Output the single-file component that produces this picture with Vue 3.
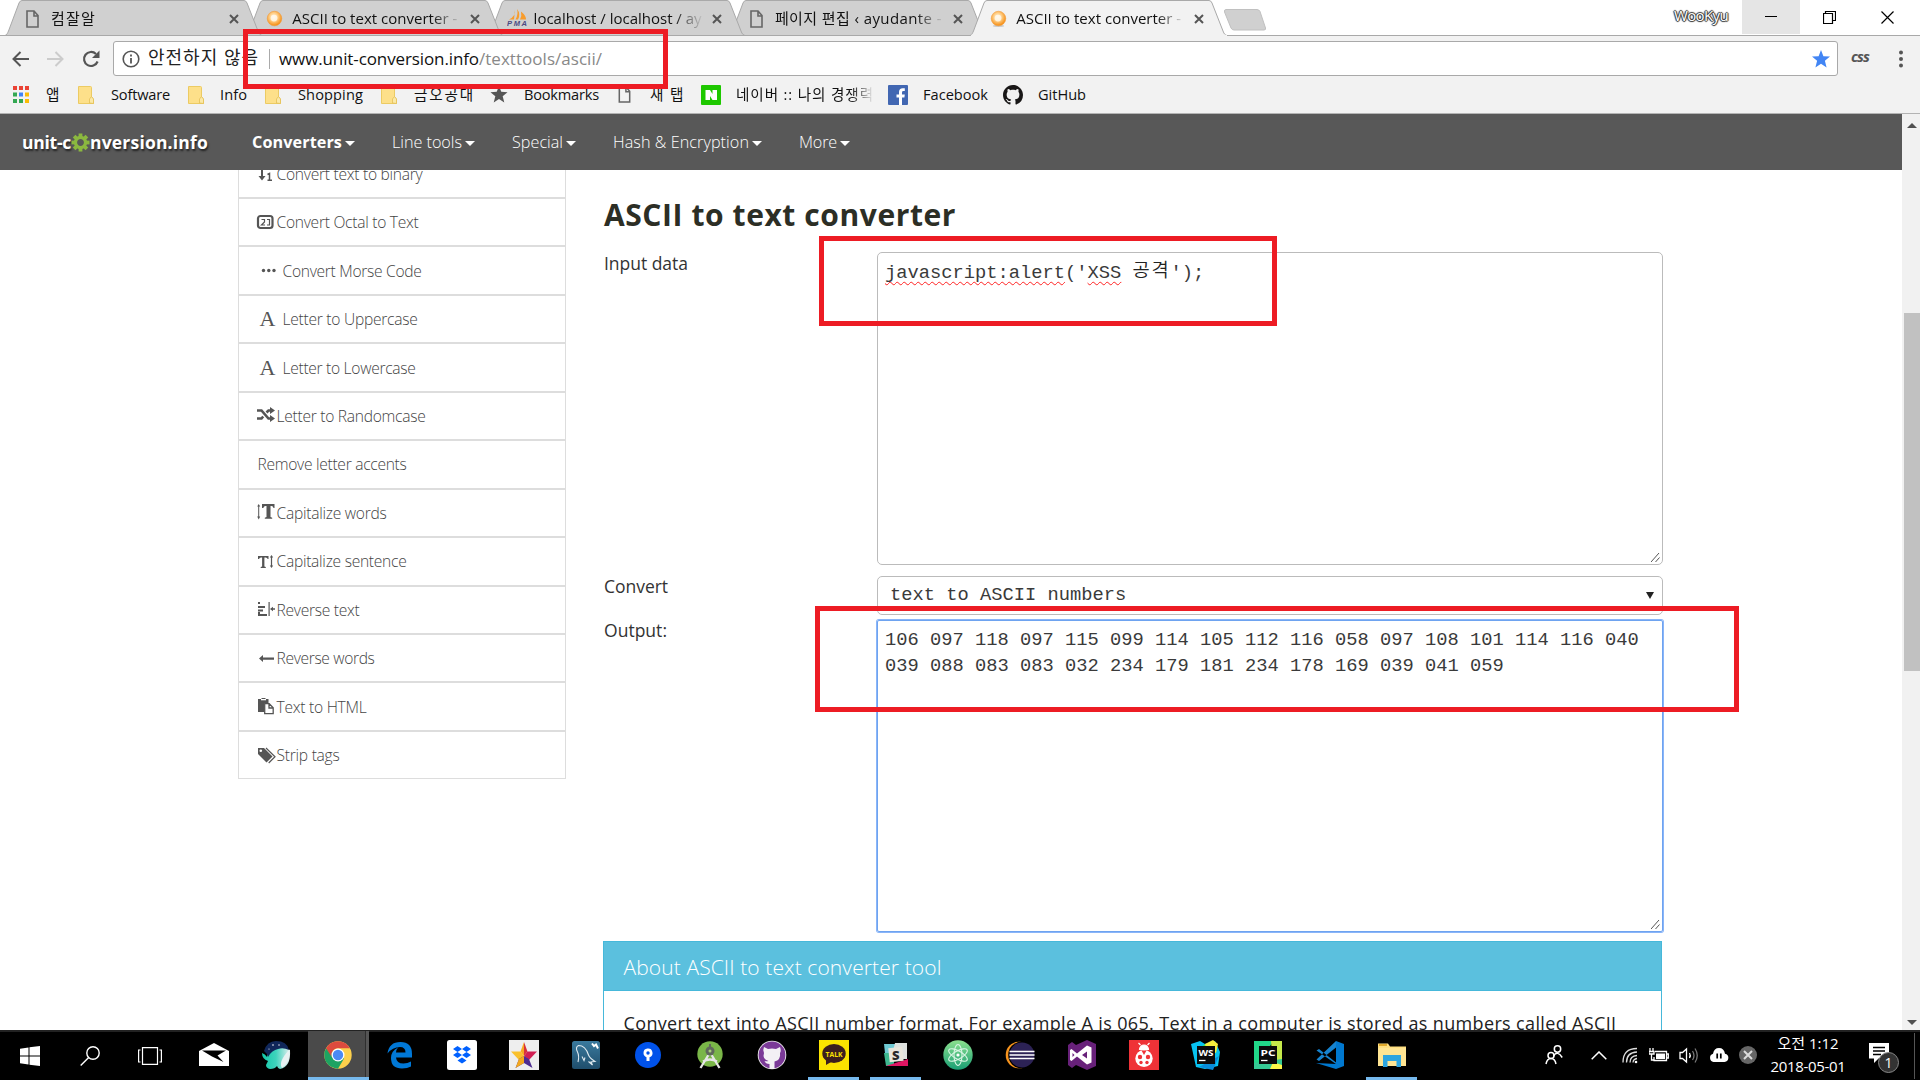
<script setup>
// Tracks a label out (or in) so that it occupies the given width.
const vFit = {
  mounted(el, { value }) {
    const width = el.getBoundingClientRect().width
    el.style.letterSpacing = (value - width) / el.textContent.length + 'px'
  }
}

const tabs = [
  { title: '컴잘알', icon: 'page', w: 45 },
  { title: 'ASCII to text converter -', icon: 'orb', w: 165 },
  { title: 'localhost / localhost / ay', icon: 'pma', w: 168 },
  { title: '페이지 편집 ‹ ayudante -', icon: 'page', w: 167 },
  { title: 'ASCII to text converter -', icon: 'orb', w: 165, active: true }
]

const bookmarks = [
  { icon: 'apps', x: 13, iw: 16, label: '앱', tx: 46, w: 15 },
  { icon: 'folder', x: 78, iw: 16, label: 'Software', tx: 111, w: 59 },
  { icon: 'folder', x: 188, iw: 16, label: 'Info', tx: 220, w: 27 },
  { icon: 'folder', x: 265, iw: 16, label: 'Shopping', tx: 298, w: 65 },
  { icon: 'folder', x: 381, iw: 16, label: '금오공대', tx: 414, w: 61 },
  { icon: 'star', x: 490, iw: 18, label: 'Bookmarks', tx: 524, w: 75 },
  { icon: 'page', x: 618, iw: 13, label: '새 탭', tx: 650, w: 35 },
  { icon: 'naver', x: 701, iw: 20, label: '네이버 :: 나의 경쟁력', tx: 736, w: 138, fade: true },
  { icon: 'fb', x: 888, iw: 20, label: 'Facebook', tx: 923, w: 65 },
  { icon: 'github', x: 1003, iw: 20, label: 'GitHub', tx: 1038, w: 48 }
].map((b, i, all) => {
  const prev = all[i - 1]
  return { ...b, lead: b.x - (prev ? prev.tx + prev.w : 0), gap: b.tx - b.x - b.iw }
})

const nav = [
  { label: 'Converters', w: 90, gap: 37, bold: true },
  { label: 'Line tools', w: 70, gap: 37 },
  { label: 'Special', w: 51, gap: 37 },
  { label: 'Hash & Encryption', w: 136, gap: 37 },
  { label: 'More', w: 38, gap: 0 }
]

const tools = [
  { label: 'Convert text to binary', icon: 'sort', w: 146 },
  { label: 'Convert Octal to Text', icon: 'octal', w: 142 },
  { label: 'Convert Morse Code', icon: 'morse', w: 139, wide: true },
  { label: 'Letter to Uppercase', icon: 'A', w: 135, wide: true },
  { label: 'Letter to Lowercase', icon: 'A', w: 133, wide: true },
  { label: 'Letter to Randomcase', icon: 'shuffle', w: 149 },
  { label: 'Remove letter accents', w: 149 },
  { label: 'Capitalize words', icon: 'theight', w: 110 },
  { label: 'Capitalize sentence', icon: 'tsmall', w: 130 },
  { label: 'Reverse text', icon: 'indent', w: 83 },
  { label: 'Reverse words', icon: 'left', w: 98 },
  { label: 'Text to HTML', icon: 'paste', w: 90 },
  { label: 'Strip tags', icon: 'tags', w: 63 }
]

const output = [
  '106 097 118 097 115 099 114 105 112 116 058 097 108 101 114 116 040',
  '039 088 083 083 032 234 179 181 234 178 169 039 041 059'
]

const apps = ['mail', 'whale', 'chrome', 'edge', 'dropbox', 'starapp', 'mysql', 'sourcetree', 'android', 'ghdesk', 'talk', 'slack', 'atom', 'eclipse', 'vs', 'bug', 'ws', 'pc', 'code', 'explorer']
const running = ['chrome', 'talk', 'slack', 'explorer']
</script>

<template>
  <div class="screen">
    <!-- symbols shared by tabs and bookmarks -->
    <svg class="defs" width="0" height="0">
      <defs>
        <radialGradient id="orbFill" cx=".45" cy=".4" r=".6">
          <stop offset="0" stop-color="#fff6e0" /><stop offset=".45" stop-color="#ffd08a" /><stop offset="1" stop-color="#f58a0c" />
        </radialGradient>
        <linearGradient id="whaleFill" x1="0" x2="1"><stop offset="0" stop-color="#12c8a8" /><stop offset=".5" stop-color="#3fd3bd" /><stop offset="1" stop-color="#e4efef" /></linearGradient>
        <linearGradient id="atomFill" x1="0" y1="0" x2="0" y2="1"><stop offset="0" stop-color="#8be08e" /><stop offset="1" stop-color="#1a9f74" /></linearGradient>
        <linearGradient id="mysqlFill" x1="0" y1="0" x2="0" y2="1"><stop offset="0" stop-color="#3a7a9e" /><stop offset="1" stop-color="#1f4e6c" /></linearGradient>
      </defs>
      <symbol id="page" viewBox="0 0 13 18"><path d="M1 1h7l4 4.500v11.500H1zM8 1v5h4" fill="none" stroke="#666" stroke-width="1.600" /></symbol>
      <symbol id="orb" viewBox="0 0 18 18"><ellipse cx="9" cy="16.300" rx="6" ry="1.200" fill="#ccc" /><circle cx="9" cy="8.500" r="7.700" fill="url(#orbFill)" stroke="#f09a38" stroke-width=".6" /><circle cx="8.500" cy="8" r="3.600" fill="#fffaf0" opacity=".8" /></symbol>
      <symbol id="octocat" viewBox="0 0 16 16"><path fill-rule="evenodd" d="M8 0C3.580 0 0 3.580 0 8c0 3.540 2.290 6.530 5.470 7.590.4.070.55-.17.55-.38 0-.19-.01-.82-.01-1.490-2.010.37-2.530-.49-2.690-.94-.09-.23-.48-.94-.82-1.130-.28-.15-.68-.52-.01-.53.63-.01 1.080.58 1.230.82.72 1.210 1.870.87 2.330.66.070-.52.28-.87.51-1.070-1.780-.2-3.640-.89-3.640-3.950 0-.87.31-1.590.82-2.150-.08-.2-.36-1.020.08-2.120 0 0 .67-.21 2.200.82.64-.18 1.320-.27 2-.27s1.360.09 2 .27c1.530-1.040 2.200-.82 2.200-.82.44 1.100.16 1.920.08 2.120.51.56.82 1.270.82 2.150 0 3.070-1.870 3.750-3.650 3.950.29.25.54.73.54 1.480 0 1.070-.01 1.930-.01 2.200 0 .21.15.46.55.38A8.010 8.010 0 0 0 16 8c0-4.420-3.580-8-8-8z" /></symbol>
    </svg>

    <header class="tabstrip">
      <div v-for="(t, i) in tabs" :key="i" class="tab" :class="{ active: t.active }" :style="{ zIndex: t.active ? 10 : 5 - i }">
        <svg class="tabshape" width="258" height="36" viewBox="0 0 258 36">
          <path d="M0 35.500C2 35 2.500 33 3.500 31L14 3Q15 .5 17 .5H239Q241 .5 242 3L253 31C254 34 255.500 35.500 257.500 35.500" :fill="t.active ? '#f2f2f2' : '#d0d0d0'" stroke="#a9a9a9" />
          <path v-if="!t.active" d="M0 35.500H258" stroke="#a9a9a9" />
          <path v-else d="M1 35.500H257" stroke="#f2f2f2" stroke-width="1.400" />
        </svg>
        <span class="tabicon">
          <svg v-if="t.icon === 'page'" width="13" height="18"><use href="#page" /></svg>
          <svg v-else-if="t.icon === 'orb'" class="orb" width="17" height="18"><use href="#orb" /></svg>
          <svg v-else class="pma" width="21" height="19" viewBox="0 0 21 19"><path d="M8 1q1 6-6 9.500h5zM10 0q4 5 1 10.500H8.500q3-5 1.500-10.500zM14 2.500q5 4 5 8h-6q2-4 1-8z" fill="#f89c2c" /><text x="0" y="17" font-size="7.500" font-weight="800" font-style="italic" textLength="20" font-family="Liberation Sans" fill="#4a4a82">PMA</text></svg>
        </span>
        <span class="tabtitle"><span v-fit="t.w" class="fit">{{ t.title }}</span></span>
        <svg class="tabclose" width="10" height="10" viewBox="0 0 10 10"><path d="M1 1l8 8M9 1L1 9" stroke="#555" stroke-width="2" /></svg>
      </div>
      <svg class="newtab" width="44" height="22" viewBox="0 0 44 22"><path d="M3 .5H34Q36 .5 37 2.500L42.500 19Q43 21 41 21H11Q9 21 8 19L1.500 3Q1 .5 3 .5z" fill="#d0d0d0" stroke="#c0c0c0" /></svg>
      <span class="user"><span v-fit="54" class="fit">WooKyu</span></span>
      <span class="wbtn min"><svg width="12" height="12"><path d="M0 5.500h12" stroke="#000" /></svg></span>
      <span class="wbtn"><svg width="13" height="13" viewBox="0 0 13 13" fill="none" stroke="#000"><path d="M.5 2.500h9v10h-9zM2.500 2.500V.5h10v9h-3" stroke-width="1.200" /></svg></span>
      <span class="wbtn last"><svg width="13" height="13" viewBox="0 0 13 13"><path d="M.5.5l12 12M12.500.5l-12 12" stroke="#000" stroke-width="1.200" /></svg></span>
    </header>

    <div class="toolbar">
      <svg class="back" width="17" height="16" viewBox="0 0 17 16" fill="none" stroke="#555" stroke-width="2"><path d="M8.500 1L1.500 8l7 7M2 8h15" /></svg>
      <svg class="fwd" width="17" height="16" viewBox="0 0 17 16" fill="none" stroke="#ccc" stroke-width="2"><path d="M8.500 1l7 7-7 7M15 8H0" /></svg>
      <svg class="reload" width="18" height="18" viewBox="0 0 18 18"><path d="M15.600 11.500A7 7 0 1 1 14 4" fill="none" stroke="#555" stroke-width="2.200" /><path d="M17.500.5v7.500H10z" fill="#555" /></svg>
      <div class="omnibox">
        <svg width="18" height="18" viewBox="0 0 18 18"><circle cx="9" cy="9" r="7.800" fill="none" stroke="#555" stroke-width="1.600" /><path d="M9 8v5.500M9 4.500v2" stroke="#555" stroke-width="1.800" /></svg>
        <span class="secure"><span v-fit="111" class="fit">안전하지 않음</span></span>
        <i class="bar"></i>
        <span class="url"><span v-fit="200" class="fit">www.unit-conversion.info</span><span v-fit="123" class="fit path">/texttools/ascii/</span></span>
        <svg class="fav" width="18" height="18" viewBox="0 0 18 18"><path d="M9 0l2.400 6.200 6.600.4-5.100 4.200L14.600 17.500 9 13.800 3.400 17.500l1.700-6.700L0 6.600l6.600-.4z" fill="#4285f4" /></svg>
      </div>
      <span class="cssext">css</span>
      <svg class="dots" width="4" height="18" viewBox="0 0 4 18" fill="#555"><circle cx="2" cy="2.500" r="2" /><circle cx="2" cy="9" r="2" /><circle cx="2" cy="15.500" r="2" /></svg>
    </div>

    <div class="bookmarks">
      <span v-for="(b, i) in bookmarks" :key="i" class="bm" :style="{ marginLeft: b.lead + 'px', gap: b.gap + 'px' }">
        <svg v-if="b.icon === 'apps'" width="16" height="18" viewBox="0 0 16 18"><g v-for="r in 3" :key="r"><rect v-for="c in 3" :key="c" :x="(c - 1) * 6" :y="(r - 1) * 6.500" width="4" height="4" :fill="[['#ea4335', '#ea4335', '#ea4335'], ['#34a853', '#4285f4', '#fbbc05'], ['#34a853', '#34a853', '#fbbc05']][r - 1][c - 1]" /></g></svg>
        <svg v-else-if="b.icon === 'folder'" width="16" height="18" viewBox="0 0 16 18"><path d="M.5.5h12q1 0 1 1v9l2 3v4H.5z" fill="#fde08a" stroke="#eccb63" /><path d="M11.500 17v-4l2-2.500 2 2.500v4.500z" fill="#fbe9a8" stroke="#e3bf55" stroke-width=".8" /></svg>
        <svg v-else-if="b.icon === 'star'" width="18" height="17" viewBox="0 0 18 18"><path d="M9 0l2.400 6.200 6.600.4-5.100 4.200L14.600 17.500 9 13.800 3.400 17.500l1.700-6.700L0 6.600l6.600-.4z" fill="#555" /></svg>
        <svg v-else-if="b.icon === 'page'" width="13" height="17"><use href="#page" /></svg>
        <svg v-else-if="b.icon === 'naver'" width="20" height="20" viewBox="0 0 20 20"><rect width="20" height="20" rx="1" fill="#1ec800" /><path d="M4.500 5H9l2.500 4V5H16v10h-4.500L9 11v4H4.500z" fill="#fff" /></svg>
        <svg v-else-if="b.icon === 'fb'" width="20" height="20" viewBox="0 0 20 20"><rect width="20" height="20" rx="1" fill="#4267b2" /><path d="M11 20v-7.500H8.500v-3H11V7q0-3.800 3.800-3.800h2v2.900h-1.500q-1.300 0-1.300 1.300v2.100h2.800l-.4 3H14V20z" fill="#fff" /></svg>
        <svg v-else width="20" height="20" fill="#191717"><use href="#octocat" /></svg>
        <span class="bmtext" :class="{ fade: b.fade }"><span v-fit="b.w" class="fit">{{ b.label }}</span></span>
      </span>
    </div>

    <div class="viewport">
      <div class="page">
        <nav class="nav">
          <div class="logo">
            <span v-fit="49" class="fit">unit-c</span>
            <svg width="19" height="19" viewBox="-10 -10 20 20"><g fill="#8bb83f"><rect v-for="a in 8" :key="a" x="-2" y="-9.500" width="4" height="5" :transform="`rotate(${a * 45})`" /></g><circle r="5.300" fill="none" stroke="#8bb83f" stroke-width="3.400" /></svg>
            <span v-fit="118" class="fit">nversion.info</span>
          </div>
          <a v-for="n in nav" :key="n.label" class="navitem" :class="{ bold: n.bold }" :style="{ marginRight: n.gap + 'px' }">
            <span v-fit="n.w" class="fit">{{ n.label }}</span><i class="caret"></i>
          </a>
        </nav>
        <div class="content">
          <ul class="sidebar">
            <li v-for="t in tools" :key="t.label" :class="{ wide: t.wide }">
              <span v-if="t.icon" class="ti">
                <span v-if="t.icon === 'A'" class="glyphA">A</span>
                <svg v-else width="18" height="17" viewBox="0 0 18 17" fill="#555">
                  <g v-if="t.icon === 'sort'"><path d="M4 0h2v11h2.500L5 15.500 1.500 11H4z" /><path d="M10.500 9.500l2-1V15M10.500 15.300h4.500" fill="none" stroke="#555" stroke-width="1.500" /><path d="M11 4h4v1h-4z" /></g>
                  <g v-else-if="t.icon === 'octal'"><rect x="1" y="2" width="14.500" height="12" rx="2.500" fill="none" stroke="#555" stroke-width="2.200" /><path d="M4.500 5.500h3V8l-3 3h3.500M10 5.500h2.500V11M10 11h3" fill="none" stroke="#555" stroke-width="1.200" /></g>
                  <g v-else-if="t.icon === 'morse'"><circle cx="6.500" cy="8.500" r="1.700" /><circle cx="11.800" cy="8.500" r="1.700" /><circle cx="17" cy="8.500" r="1.700" /></g>
                  <g v-else-if="t.icon === 'shuffle'"><path d="M0 3.500h4.500l7 8H14M0 11.500h4.500l1.700-2M9.500 5.500l2-2H14" fill="none" stroke="#555" stroke-width="2.600" /><path d="M13 0l5 3.500L13 7zM13 8l5 3.500-5 3.500z" /></g>
                  <g v-else-if="t.icon === 'theight'"><path d="M1.700 0l1.500 2.500H2.200v10h1L1.700 15.500.2 12.500h1v-10h-1z" /><path d="M5 0h12.500v4h-1q-.3-2-2-2h-1v11l1.700.7v1H7.800v-1l1.700-.7V2h-1q-1.700 0-2.200 2H5z" /></g>
                  <g v-else-if="t.icon === 'tsmall'"><path d="M1 3h10.500v3h-.8q-.4-1.500-2-1.500H7.400v9l1.400.6v.9H3.700v-.9l1.400-.6v-9H4q-1.600 0-2 1.500H1z" /><path d="M14.500 2l1.700 2.500h-1.100v8h1.100L14.500 15l-1.700-2.500h1.100v-8h-1.100z" /></g>
                  <g v-else-if="t.icon === 'indent'"><path d="M1 1h2v2H1zM1 5h7v2H1zM1 8.500h5v2H1zM1 13h9v2H1zM1 11h2v2H1zM11.500 1h1.200v14h-1.200zM13 8l3-2.300v1.500h2v1.600h-2v1.500z" /></g>
                  <g v-else-if="t.icon === 'left'"><path d="M2 8.500L6 5v2.500h11v2.200H6V12z" /></g>
                  <g v-else-if="t.icon === 'paste'"><path d="M1 1h10.500v4H7v9H1z" /><path d="M4 .3h5v2H4z" fill="#fff" /><path d="M4.500.5h4" stroke="#555" /><path d="M7.700 5.700h4.500l4 4v6H7.700zM12 6v4h4" fill="#fff" stroke="#555" stroke-width="1.300" /></g>
                  <g v-else><path d="M1 1h6l8.500 8.500-6 6L1 7z" /><circle cx="3.800" cy="3.800" r="1.300" fill="#fff" /><path d="M9 1l9 8.700-6.300 6.300" fill="none" stroke="#555" stroke-width="1.200" /></g>
                </svg>
              </span>
              <span v-fit="t.w" class="fit">{{ t.label }}</span>
            </li>
          </ul>

          <main class="main">
            <h1><span v-fit="352" class="fit">ASCII to text converter</span></h1>
            <div class="row first">
              <label><span v-fit="84" class="fit">Input data</span></label>
              <div class="area"><span class="typo">javascript:alert</span>('<span class="typo">XSS</span> <span class="ko">공격</span>');
                <svg class="grip" width="9" height="9"><path d="M0 9L8 0M4.500 9L8.500 4.500" stroke="#555" stroke-width="1" /></svg>
              </div>
            </div>
            <div class="row second">
              <label><span v-fit="64" class="fit">Convert</span></label>
              <div class="select">text to ASCII numbers<i></i></div>
            </div>
            <div class="row">
              <label><span v-fit="63" class="fit">Output:</span></label>
              <div class="area out"><div v-for="l in output" :key="l">{{ l }}</div>
                <svg class="grip" width="9" height="9"><path d="M0 9L8 0M4.500 9L8.500 4.500" stroke="#555" stroke-width="1" /></svg>
              </div>
            </div>
            <section class="panel">
              <h2><span v-fit="318" class="fit">About ASCII to text converter tool</span></h2>
              <p><span v-fit="993" class="fit">Convert text into ASCII number format. For example A is 065. Text in a computer is stored as numbers called ASCII</span></p>
            </section>
          </main>
        </div>
      </div>
      <div class="scrollbar"><i class="up"></i><b></b><i class="down"></i></div>
    </div>

    <footer class="taskbar">
      <span class="sys"><svg width="20" height="20" viewBox="0 0 20 20" fill="#fff"><path d="M0 2.800L8.500 1.500v8H0zM9.500 1.300L20 0v9.500H9.500zM0 10.500h8.500v8L0 17.300zM9.500 10.500H20V20L9.500 18.700z" /></svg></span>
      <span class="sys"><svg width="20" height="20" viewBox="0 0 20 20" fill="none" stroke="#fff" stroke-width="1.400"><circle cx="13" cy="7" r="6.200" /><path d="M8.700 11.500L.7 19.500" /></svg></span>
      <span class="sys third"><svg width="24" height="18" viewBox="0 0 24 18" fill="none" stroke="#fff" stroke-width="1.200"><path d="M4.500.6h15v16.800h-15zM2.500 3H.6v12h1.900M21.500 3h1.900v12h-1.900" /></svg></span>
      <span v-for="a in apps" :key="a" class="app" :class="{ on: running.includes(a), front: a === 'chrome' }">
        <svg width="30" height="30" viewBox="0 0 30 30">
          <g v-if="a === 'mail'"><path d="M0 11L15 3l15 8v15H0z" fill="#fff" /><path d="M3 10.500h24L18.500 15.500l6 6.500L13 16.500z" fill="#000" /></g>
          <g v-else-if="a === 'whale'"><path d="M1 13q3 1 5 4Q8 5 18 5l11 5q1 17-10 19-2 0-3-3-2 3-7 3-4-1-4-4l2-4Q1 19 1 13z" fill="url(#whaleFill)" /><path d="M3 11Q6 1 15 1q11 0 13 9-6-3-11-1-6 1-10 8-1-4-4-6z" fill="#10275a" /><path d="M28 10q2 12-7 18-4-6 7-18z" fill="#e8f1f2" /><circle cx="12" cy="5" r=".8" fill="#fff" /><circle cx="18" cy="5" r=".7" fill="#fff" /><circle cx="8" cy="9" r=".6" fill="#fff" /></g>
          <g v-else-if="a === 'chrome'"><circle cx="15" cy="15" r="13.700" fill="#fcd04c" /><path d="M15 15L3.100 8.200A13.700 13.700 0 0 0 15 28.700L21 18.500z" fill="#1da362" /><path d="M3.100 8.200A13.700 13.700 0 0 1 26.900 8.300H15a6.700 6.700 0 0 0-6.200 9z" fill="#dd4b3e" /><circle cx="15" cy="15" r="6.500" fill="#fff" /><circle cx="15" cy="15" r="5.200" fill="#4a8af4" /></g>
          <path v-else-if="a === 'edge'" d="M2.500 13.500Q4 2 15.500 2 27 2 27 14v3.500H11q.5 6 7.500 6 4 0 7.500-2v5Q22.500 28.500 17 28.500 6 28.500 6 18q0-7 7-10.500-1.800 2-2 5h9.500q0-5.500-5.500-5.500-7.500 0-12.500 6.500z" fill="#0078d7" />
          <g v-else-if="a === 'dropbox'"><rect width="30" height="30" rx="2.500" fill="#fff" /><path d="M10.500 6l4.500 3-4.500 3L6 9zM19.500 6L24 9l-4.500 3L15 9zM10.500 12l4.500 3-4.500 3L6 15zM19.500 12l4.500 3-4.500 3-4.500-3zM15 17.500l4.500 3-4.500 3-4.500-3z" fill="#0061ff" /></g>
          <g v-else-if="a === 'starapp'"><rect width="30" height="30" fill="#eee" /><path d="M15 2l3.500 9.500L15 16z" fill="#d8313c" /><path d="M15 2l-3.500 9.500L15 16z" fill="#f7a823" /><path d="M2 11.500h9.500L15 16l-5 4z" fill="#f9c02c" /><path d="M28 11.500h-9.500L15 16l5 4z" fill="#d11f53" /><path d="M15 16l-5 3-3.500 9L15 23l8.500 5L20 19z" fill="#4d2c91" /><path d="M15 16v7l-8.500 5L10 19z" fill="#f4a81d" /></g>
          <g v-else-if="a === 'mysql'"><rect x="1" y="1" width="28" height="28" rx="2.500" fill="url(#mysqlFill)" /><path d="M7 22Q8.500 16 6.500 12 4 7 7.500 5.500q7 0 10 9.500 1 3 6.500 6.500l-4 .5 1.500 3-4-3.500M11 16.500l2 4 1-3" fill="none" stroke="#dfeaf0" stroke-width="1.100" /><path d="M21 3.500l2 2.500 2-1.500 2 4" fill="none" stroke="#fff" stroke-width="2" /></g>
          <g v-else-if="a === 'sourcetree'"><circle cx="15" cy="15" r="13" fill="#0052ea" /><path d="M10.500 13a4.500 4.500 0 1 1 6 4.200V21h-3v-3.800A4.500 4.500 0 0 1 10.500 13z" fill="#fff" /><circle cx="15" cy="13" r="1.700" fill="#0052ea" /></g>
          <g v-else-if="a === 'android'"><circle cx="15" cy="14" r="12.700" fill="#7ab648" /><path d="M14 14L5.500 28M16 14l8.500 14M8 21.500q7-4 14 0" stroke="#e6e6e6" stroke-width="2.300" fill="none" /><circle cx="15" cy="11" r="4.500" fill="#60695c" /><circle cx="15" cy="11" r="1.500" fill="#a8cf7a" /><path d="M14 4h2v4h-2z" fill="#60695c" /></g>
          <g v-else-if="a === 'ghdesk'"><circle cx="15" cy="15" r="14.300" fill="#eee" /><circle cx="15" cy="15" r="13.400" fill="#7b3a98" /><path d="M7 7l4 2q4-1.200 8 0l4-2q1.500 4 0 6 1 7-5.500 8.500V29h-5v-5q-4 0-5-3 2 .5 4 0Q5 19 7 13 5.500 10 7 7z" fill="#f3f0f5" /></g>
          <g v-else-if="a === 'talk'"><rect width="30" height="30" fill="#fbe300" /><ellipse cx="15" cy="13.500" rx="11.700" ry="9.500" fill="#3b1e1e" /><path d="M7 19v6l6-3.500z" fill="#3b1e1e" /><text x="6.500" y="16.500" font-size="7.500" font-weight="700" textLength="17" lengthAdjust="spacingAndGlyphs" font-family="Open Sans" fill="#fbe300">TALK</text></g>
          <g v-else-if="a === 'slack'"><path d="M3 4h18L5 22z" fill="#6fcad4" /><path d="M14 3h12v16H10z" fill="#dfe2df" /><path d="M3 13h10v13H5z" fill="#3eb890" /><path d="M5 26l22-7v7z" fill="#e01563" /><rect x="8" y="7.500" width="14" height="14" fill="#e9e6dc" transform="rotate(-6 15 15)" /><text x="11" y="19.500" font-size="13" font-weight="800" font-family="Open Sans" fill="#2a2a2a">S</text></g>
          <g v-else-if="a === 'atom'"><circle cx="15" cy="15" r="14.700" fill="url(#atomFill)" /><g fill="none" stroke="#d9f5e4" stroke-width="1.100"><ellipse cx="15" cy="15" rx="4" ry="10.500" /><ellipse cx="15" cy="15" rx="4" ry="10.500" transform="rotate(60 15 15)" /><ellipse cx="15" cy="15" rx="4" ry="10.500" transform="rotate(-60 15 15)" /></g><circle cx="15" cy="15" r="1.600" fill="#fff" /></g>
          <g v-else-if="a === 'eclipse'"><circle cx="14" cy="15" r="13.300" fill="#f7941e" /><circle cx="16.500" cy="15" r="13.300" fill="#000" /><circle cx="17" cy="15" r="12.500" fill="#2c2255" /><path d="M4.500 11.500h25M4.500 15h25M4.500 18.500h25" stroke="#fff" stroke-width="1.700" /></g>
          <g v-else-if="a === 'vs'"><path d="M1 5l4-3 4 3L20 0l9 4v22l-9 4L9 25l-4 3-4-3z" fill="#68217a" /><path d="M4.500 9L10 13.500l10-8 4.500 2v15l-4.500 2-10-8L4.500 21l-1.500-1v-10zM5.500 13v4l2-2zM20 11.500L15 15l5 3.500z" fill="#fff" fill-rule="evenodd" /></g>
          <g v-else-if="a === 'bug'"><rect width="30" height="30" fill="#ef3237" /><path d="M10.500 9.500a4.500 4.500 0 0 1 9 0zM11.500 5L9.500 3M18.500 5l2-2" fill="#fff" stroke="#fff" stroke-width="1.200" /><ellipse cx="15" cy="18.500" rx="8.700" ry="8.500" fill="#fff" /><circle cx="11" cy="17" r="2.200" fill="#ef3237" /><circle cx="19" cy="17" r="2.200" fill="#ef3237" /><circle cx="12" cy="22.500" r="1.700" fill="#ef3237" /><circle cx="18" cy="22.500" r="1.700" fill="#ef3237" /><path d="M12.500 10.500h5L15 15z" fill="#ef3237" /></g>
          <g v-else-if="a === 'ws'"><path d="M0 4l9-3 5 3 10-3 5 11-2 14-13 3-9-2z" fill="#07c3f2" /><path d="M14 4l8-4 5 4-2 9-11-5z" fill="#f5ee3c" /><path d="M8 27l14 3 6-14z" fill="#088cd9" /><path d="M14 4l-5 4h6z" fill="#3bea62" /></g>
          <g v-else-if="a === 'pc'"><path d="M1 1h19L4 29H1z" fill="#21d789" /><path d="M18 1h11v28H20z" fill="#c5e94a" /><path d="M1 23l28-4v10H1z" fill="#35c994" /><path d="M20 22l9 3v4H17z" fill="#fcf84a" /></g>
          <g v-else-if="a === 'code'"><path d="M21 1l8 3v22l-8 3L1 23l20 1z" fill="#0078cf" /><path d="M1.500 10.500L4 9l17 13.500V24zM1.500 19.500L4 21 21 7.500V1z" fill="#1683cf" /></g>
          <g v-else><path d="M1 3.500h10l2 3h16V26H1z" fill="#ffdf80" /><path d="M1 8h28v18H1z" fill="#ffe593" /><path d="M2 4h8v2H2z" fill="#e0a92c" /><path d="M6 15h18v12h-4.500v-6h-9v6H6z" fill="#2da5e0" /></g>
          <g v-if="a === 'ws' || a === 'pc'"><rect x="6" y="6" width="18" height="18" fill="#0b0b0b" /><text x="7.500" y="15.500" font-size="9.500" font-weight="700" textLength="15" lengthAdjust="spacingAndGlyphs" font-family="Open Sans" fill="#fff">{{ a === 'ws' ? 'WS' : 'PC' }}</text><path d="M8 20.500h6.500" stroke="#fff" stroke-width="1.300" /></g>
        </svg>
      </span>
      <div class="tray">
        <svg class="people" width="18" height="20" viewBox="0 0 18 20" fill="none" stroke="#fff" stroke-width="1.500"><circle cx="12.500" cy="4" r="3.200" /><path d="M8.500 11q4-6 8.700 1.500" /><circle cx="6" cy="10.500" r="3" /><path d="M1 19q1-5.500 5-5.500t5 5.500" /></svg>
        <svg class="chev" width="16" height="9" viewBox="0 0 16 9" fill="none" stroke="#fff" stroke-width="1.500"><path d="M.7 8.300L8 1l7.300 7.300" /></svg>
        <svg class="wifi" width="16" height="17" viewBox="0 0 16 17" fill="none" stroke="#ddd" stroke-width="1.300"><path d="M1 15.500Q1 1.500 15 1.500M4.500 15.500Q4.500 5.500 15 5M8 15.500Q8 9 15 8.500M11 15.500q.3-3.500 4-4" /><circle cx="14" cy="15" r="1.300" fill="#fff" stroke="none" /></svg>
        <svg class="batt" width="20" height="15" viewBox="0 0 20 15" fill="none" stroke="#fff" stroke-width="1.300"><path d="M6 3.500h11.500v9H5V9M18 6h1.300v4H18" /><path d="M7 5.500h9v5.500H7z" fill="#fff" stroke="none" /><path d="M1 0v3M4 0v3M0 3.500h5v2.500H0zM2.500 6v6H5" /></svg>
        <svg class="spk" width="20" height="17" viewBox="0 0 20 17" fill="none" stroke="#fff" stroke-width="1.300"><path d="M1 5.500h2.500L7.500 2v13l-4-3.500H1zM10.500 6q1.500 2.500 0 5" /><path d="M13.500 4q3 4.500 0 9M16 1.500q4.500 7 0 14" stroke="#777" /></svg>
        <svg class="cloud" width="20" height="14" viewBox="0 0 20 14"><path d="M4.500 14a4.300 4.300 0 0 1-.5-8.300Q5 0 10 0t6 5.700a4.200 4.200 0 0 1-.5 8.300z" fill="#fff" /><path d="M8.200 5.500v5M11.800 5.500v5" stroke="#000" stroke-width="1.700" /></svg>
        <svg class="xx" width="18" height="18" viewBox="0 0 18 18"><circle cx="9" cy="9" r="9" fill="#666" /><path d="M5 5l8 8M13 5l-8 8" stroke="#ddd" stroke-width="2" /></svg>
        <div class="clock"><span v-fit="61" class="fit">오전 1:12</span><span v-fit="75" class="fit">2018-05-01</span></div>
        <div class="note">
          <svg width="20" height="20" viewBox="0 0 20 20"><path d="M0 0h20v15.500H9.500L5 20v-4.500H0z" fill="#fff" /><path d="M4 4.500h12M4 8h12M4 11.500h8" stroke="#000" stroke-width="1.300" /></svg>
          <span class="badge">1</span>
        </div>
        <i class="peek"></i>
      </div>
    </footer>

    <div class="mark m1"></div>
    <div class="mark m2"></div>
    <div class="mark m3"></div>
  </div>
</template>

<style>
body { margin: 0; overflow: hidden; }
</style>

<style scoped>
* { box-sizing: border-box; }
.screen { position: relative; width: 1920px; height: 1080px; overflow: hidden; display: flex; flex-direction: column; background: #fff; font-family: "Open Sans", "Noto Sans CJK KR", sans-serif; }
.defs { position: absolute; }
svg { display: block; flex: none; }
.fit { display: inline-block; white-space: pre; }

.tabstrip { height: 36px; flex: none; display: flex; padding-left: 5px; background: linear-gradient(#fff 35px, #a9a9a9 35px); font-size: 15px; color: #111; }
.tab { position: relative; width: 241.3px; flex: none; display: flex; align-items: center; padding-left: 21px; }
.tabshape { position: absolute; left: 0; top: 0; overflow: visible; }
.tabicon, .tabtitle, .tabclose { position: relative; }
.tabicon { width: 25px; margin-top: 2px; }
.orb { margin-left: -1px; }
.pma { margin-left: -2px; margin-bottom: 2px; }
.tabtitle { width: 169px; line-height: 30px; overflow: hidden; -webkit-mask-image: linear-gradient(90deg, #000 140px, transparent 170px); mask-image: linear-gradient(90deg, #000 140px, transparent 170px); }
.tabclose { margin-left: 9px; margin-top: 2px; }
.newtab { margin: 9px 0 0 12px; }
.user { margin-left: auto; margin-right: 14px; font-size: 15px; line-height: 31px; color: #fff; text-shadow: 0 0 1px #333, 1px 0 1px #333, -1px 0 1px #333, 0 1px 1px #333, 0 -1px 1px #333; }
.wbtn { width: 58px; height: 34px; display: flex; align-items: center; justify-content: center; }
.wbtn.min { background: #e5e5e5; }
.wbtn.last { width: 62px; padding-right: 3px; }

.toolbar { height: 40px; flex: none; background: #f2f2f2; display: flex; align-items: center; padding: 5px 0 0 12px; }
.fwd { margin-left: 18px; }
.reload { margin-left: 18px; }
.omnibox { margin-left: 13px; width: 1725px; height: 35px; background: #fff; border: 1px solid #a9a9a9; border-radius: 3px; display: flex; align-items: center; padding-left: 8px; }
.secure { margin-left: 8px; width: 121px; font-size: 18px; line-height: 28px; color: #222; margin-top: -4px; }
.bar { width: 1px; height: 20px; background: #aaa; }
.url { margin-left: 9px; margin-right: 1px; font-size: 17px; line-height: 30px; color: #111; white-space: nowrap; }
.path { color: #888; }
.fav { margin-left: auto; margin-right: 7px; }
.cssext { margin-left: 13px; margin-top: -3px; font-size: 14.500px; line-height: 16px; font-style: italic; font-weight: 700; color: #555; width: 20px; letter-spacing: -.9px; }
.dots { margin-left: 28px; }
.bookmarks { height: 38px; flex: none; background: #f2f2f2; border-bottom: 1px solid #b3b3b3; display: flex; align-items: center; font-size: 14.600px; line-height: 24px; color: #111; }
.bm { display: flex; align-items: center; flex: none; }
.bmtext { margin-bottom: 2px; }
.fade { -webkit-mask-image: linear-gradient(90deg, #000 115px, transparent 138px); mask-image: linear-gradient(90deg, #000 115px, transparent 138px); }

.viewport { height: 916px; flex: none; display: flex; }
.page { width: 1902px; display: flex; flex-direction: column; }
.nav { height: 56px; flex: none; background: #585858; display: flex; align-items: center; padding-left: 22px; color: #fff; }
.logo { width: 230px; display: flex; align-items: center; font-size: 17.500px; font-weight: 700; line-height: 30px; text-shadow: 1px 2px 2px #222; }
.navitem { display: flex; align-items: center; font-size: 16.200px; font-weight: 300; line-height: 30px; }
.navitem.bold { font-weight: 700; }
.caret { width: 0; height: 0; margin: 3px 0 0 3px; border: 5px solid transparent; border-top-color: #fff; border-bottom: 0; }
.content { height: 860px; overflow: hidden; display: flex; align-items: flex-start; padding-left: 238px; }
.sidebar { list-style: none; margin: -20.500px 37px 0 0; padding: 0; width: 328px; flex: none; }
.sidebar li { height: 48.460px; border: 1px solid #ddd; display: flex; align-items: center; padding-left: 18.500px; font-size: 15.600px; font-weight: 300; line-height: 24px; color: #444; }
.ti { width: 20px; margin-left: -1px; height: 17px; display: flex; align-items: center; }
.ti svg { overflow: visible; }
.wide .ti { width: 26px; }
.glyphA { font-family: "Liberation Serif", serif; font-size: 22px; font-weight: 400; line-height: 20px; margin-left: 3px; color: #555; }
.main { width: 1060px; flex: none; }
h1 { margin: 25px 0 17px; padding-left: 1px; height: 40px; line-height: 40px; font-size: 30px; font-weight: 700; color: #2c2e25; }
.row { display: flex; height: 314px; }
.first { margin-bottom: 10px; height: 313px; }
.second { margin-bottom: 4px; height: 40px; padding-top: 1px; }
label { width: 274px; padding-left: 1px; font-size: 17.500px; line-height: 23px; color: #333; }
.second label { margin-top: -1px; }
.area, .select { position: relative; width: 786px; border: 1px solid #bbb; border-radius: 5px; font-family: "Liberation Mono", "Noto Sans CJK KR", monospace; font-size: 18.750px; line-height: 26px; color: #3a3a3a; white-space: pre; }
.area { padding: 7px; overflow: hidden; }
.out { margin-top: 1px; padding-top: 6px; height: 312px; border-color: #6ea3f0; border-radius: 2px; box-shadow: 0 0 0 1px #8ab5f8; }
.typo { text-decoration: underline wavy #f22 1px; text-underline-offset: 3px; text-decoration-skip-ink: none; }
.ko { position: relative; top: -1px; color: #222; font-weight: 350; letter-spacing: 1.700px; font-family: "Noto Sans CJK KR", sans-serif; line-height: 20px; }
.grip { position: absolute; right: 2px; bottom: 2px; }
.select { padding: 0 12px 0; line-height: 35px; height: 39px; display: flex; align-items: center; justify-content: space-between; }
.select i { border: 4px solid transparent; border-top: 7px solid #222; border-bottom: 0; margin: 0 -4px 0 0; }
.panel { margin-top: 8px; width: 1059px; border: 1px solid #46b8da; height: 200px; }
h2 { margin: 0; height: 49px; line-height: 50px; padding-left: 19.500px; font-size: 21px; font-weight: 300; color: #fff; background: #5bc0de; border-bottom: 1px solid #46b8da; }
p { margin: 0; padding: 18px 19.500px; font-size: 18px; line-height: 28px; color: #222; }

.scrollbar { width: 18px; background: #f1f1f1; display: flex; flex-direction: column; align-items: flex-end; }
.scrollbar b { width: 16px; height: 358px; background: #c1c1c1; margin-top: 185px; }
.up { margin: 9px 3px 0 0; border: 5px solid transparent; border-top: 0; border-bottom-color: #505050; }
.down { margin: auto 3px 5px 0; border: 5px solid transparent; border-bottom: 0; border-top-color: #505050; }

.taskbar { height: 50px; flex: none; background: #000; border-top: 2px solid #222; display: flex; align-items: stretch; }
.sys { width: 60px; display: flex; align-items: center; justify-content: center; padding-bottom: 1px; }
.third { width: 63px; padding-right: 3px; }
.app { width: 62px; padding: 8px 16px 0; position: relative; }
.on::after { content: ""; position: absolute; left: 5px; bottom: 0; width: 51px; height: 3px; background: #76b9ed; }
.front { background: linear-gradient(90deg, #4a4a4a 57px, #2e2e2e 57px, #2e2e2e 58px, #555 58px); width: 61px; margin: -1px 0 0 1px; padding: 9px 15px 0; }
.front::after { left: 0; width: 61px; }
.tray { flex: 1; display: flex; align-items: center; padding: 0 0 2px 122px; }
.chev { margin-left: 28px; }
.wifi { margin-left: 15px; }
.batt { margin-left: 11px; }
.spk { margin-left: 10px; }
.cloud { margin-left: 10px; }
.xx { margin-left: 10px; }
.clock { width: 100px; display: flex; flex-direction: column; align-items: center; margin-left: 1px; color: #fff; font-size: 15px; line-height: 23px; }
.note { position: relative; margin-left: 11px; margin-top: -4px; }
.badge { position: absolute; left: 9px; top: 9px; width: 21px; height: 21px; border-radius: 50%; background: #333; border: 1px solid #888; color: #fff; font-size: 14px; line-height: 19px; text-align: center; }
.peek { width: 1px; height: 46px; margin: 2px 5px 0 auto; background: #555; }

.mark { position: absolute; border: 5px solid #ed1c24; z-index: 20; }
.m1 { left: 243px; top: 29px; width: 425px; height: 60px; }
.m2 { left: 819px; top: 236px; width: 458px; height: 90px; }
.m3 { left: 815px; top: 606px; width: 924px; height: 106px; }
</style>
